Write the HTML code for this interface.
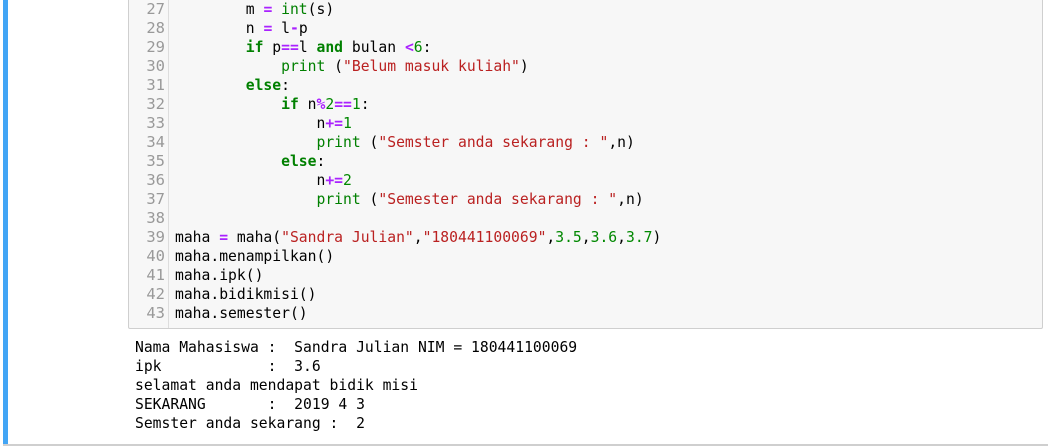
<html><head><style>
body{margin:0;width:1048px;height:448px;background:#fff;overflow:hidden;position:relative;font-family:"DejaVu Sans Mono","Liberation Mono",monospace;font-size:14.7px}
.bar{position:absolute;left:3px;top:0;width:5px;height:445px;background:#42a5f5}
.bl{position:absolute;left:3px;right:0;top:444px;height:2px;background:#cfcfcf}
.cell{position:absolute;left:128px;top:-2px;width:913px;height:329px;background:#f7f7f7;border:1px solid #cfcfcf;border-radius:2px}
.gut{position:absolute;left:0;top:0;width:39px;height:100%;border-right:1px solid #ddd}
.ln{position:absolute;left:0;width:36px;text-align:right;color:#999;line-height:19px;font-size:15.5px}
.cd{position:absolute;left:46px;white-space:pre;line-height:19px;color:#000}
.k{color:#008000;font-weight:bold}.o{color:#aa22ff;font-weight:bold}.s{color:#ba2121}.n{color:#080}.b{color:#008000}
.out{position:absolute;left:135px;top:338px;white-space:pre;line-height:19px;color:#000}
</style></head><body>
<div class="bar"></div>
<div class="cell"><div class="gut"></div>
<div class="ln" style="top:1px">27<br>28<br>29<br>30<br>31<br>32<br>33<br>34<br>35<br>36<br>37<br>38<br>39<br>40<br>41<br>42<br>43</div>
<div class="cd" style="top:1px">        m <span class="o">=</span> <span class="b">int</span>(s)
        n <span class="o">=</span> l<span class="o">-</span>p
        <span class="k">if</span> p<span class="o">==</span>l <span class="k">and</span> bulan <span class="o">&lt;</span><span class="n">6</span>:
            <span class="b">print</span> (<span class="s">"Belum masuk kuliah"</span>)
        <span class="k">else</span>:
            <span class="k">if</span> n<span class="o">%</span><span class="n">2</span><span class="o">==</span><span class="n">1</span>:
                n<span class="o">+=</span><span class="n">1</span>
                <span class="b">print</span> (<span class="s">"Semster anda sekarang : "</span>,n)
            <span class="k">else</span>:
                n<span class="o">+=</span><span class="n">2</span>
                <span class="b">print</span> (<span class="s">"Semester anda sekarang : "</span>,n)

maha <span class="o">=</span> maha(<span class="s">"Sandra Julian"</span>,<span class="s">"180441100069"</span>,<span class="n">3.5</span>,<span class="n">3.6</span>,<span class="n">3.7</span>)
maha.menampilkan()
maha.ipk()
maha.bidikmisi()
maha.semester()</div>
</div>
<div class="out">Nama Mahasiswa :  Sandra Julian NIM = 180441100069
ipk            :  3.6
selamat anda mendapat bidik misi
SEKARANG       :  2019 4 3
Semster anda sekarang :  2</div>
<div class="bl"></div>
</body></html>
